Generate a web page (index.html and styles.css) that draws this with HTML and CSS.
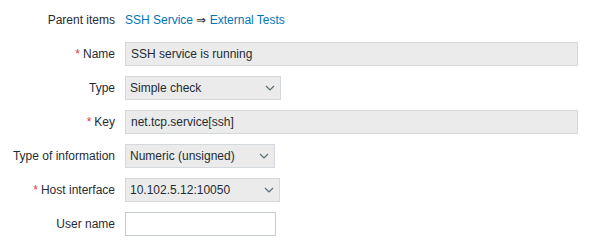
FILE: index.html
```html
<!DOCTYPE html>
<html lang="en">
<head>
  <meta charset="UTF-8">
  <title>Item</title>
  <link rel="stylesheet" href="styles.css">
</head>
<body>
  <form class="form-grid">
    <label class="form-label">Parent items</label>
    <div class="form-field">
      <span class="breadcrumbs"><a href="#" class="link">SSH Service</a> &rArr; <a href="#" class="link">External Tests</a></span>
    </div>

    <label class="form-label"><span class="asterisk">*</span> Name</label>
    <div class="form-field">
      <div class="input readonly wide">SSH service is running</div>
    </div>

    <label class="form-label">Type</label>
    <div class="form-field">
      <div class="select readonly w-type">Simple check
        <svg class="arrow" width="10" height="6" viewBox="0 0 10 6"><polyline points="1,1 5,5 9,1" fill="none" stroke="#5b6b73" stroke-width="1.2"/></svg>
      </div>
    </div>

    <label class="form-label"><span class="asterisk">*</span> Key</label>
    <div class="form-field">
      <div class="input readonly wide">net.tcp.service[ssh]</div>
    </div>

    <label class="form-label">Type of information</label>
    <div class="form-field">
      <div class="select readonly w-info">Numeric (unsigned)
        <svg class="arrow" width="10" height="6" viewBox="0 0 10 6"><polyline points="1,1 5,5 9,1" fill="none" stroke="#5b6b73" stroke-width="1.2"/></svg>
      </div>
    </div>

    <label class="form-label"><span class="asterisk">*</span> Host interface</label>
    <div class="form-field">
      <div class="select w-host">10.102.5.12:10050
        <svg class="arrow" width="10" height="6" viewBox="0 0 10 6"><polyline points="1,1 5,5 9,1" fill="none" stroke="#5b6b73" stroke-width="1.2"/></svg>
      </div>
    </div>

    <label class="form-label">User name</label>
    <div class="form-field">
      <div class="input empty w-user"></div>
    </div>
  </form>
</body>
</html>
```

FILE: styles.css
```css
body {
  font-family: "Liberation Sans", Arial, sans-serif;
  font-size: 12px;
  color: #1f2c33;
  background-color: #fff;
  margin: 0;
  padding: 8px 0 0;
}
.form-grid {
  display: grid;
  grid-template-columns: 115px auto;
  column-gap: 10px;
  row-gap: 10px;
  grid-auto-rows: 24px;
}
.form-label {
  display: flex;
  align-items: center;
  justify-content: flex-end;
  white-space: nowrap;
}
.asterisk {
  color: #e33734;
  margin-right: 3px;
}
.form-field {
  display: flex;
  align-items: center;
}
.breadcrumbs {
  white-space: nowrap;
}
.link {
  color: #0275b8;
  text-decoration: none;
}
.input,
.select {
  box-sizing: border-box;
  height: 24px;
  border: 1px solid #d3d9dc;
  background-color: #ebebeb;
  display: flex;
  align-items: center;
  padding: 0 5px;
  white-space: nowrap;
}
.select {
  padding: 0 4px;
  justify-content: space-between;
}
.select .arrow {
  margin-right: 1px;
}
.empty {
  background-color: #fff;
  border-color: #c5ccd0;
}
.wide { width: 453px; }
.w-type { width: 156px; }
.w-info { width: 150px; }
.w-host { width: 155px; }
.w-user { width: 151px; }
```
